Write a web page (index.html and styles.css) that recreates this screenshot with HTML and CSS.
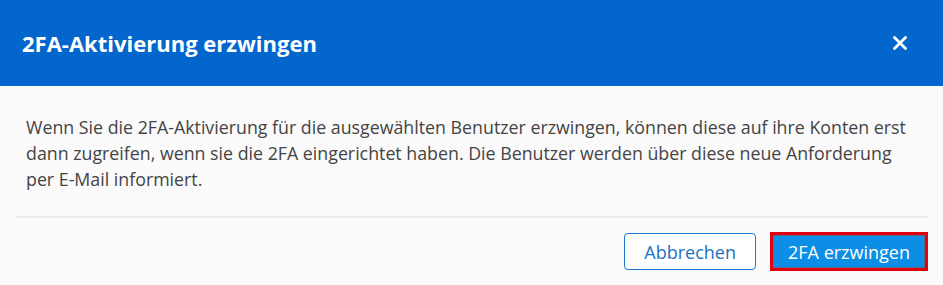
FILE: index.html
```html
<!DOCTYPE html>
<html lang="de">
<head>
  <meta charset="UTF-8" />
  <title>2FA-Aktivierung erzwingen</title>
  <link rel="stylesheet" href="styles.css">
</head>
<body>

  <div class="modal">
    <div class="modal-header">
      <h2>2FA-Aktivierung erzwingen</h2>
      <button class="close-btn" title="Schließen">
        <svg width="14" height="14" viewBox="0 0 14 14">
          <path d="M1.5 1.5 L12.5 12.5 M12.5 1.5 L1.5 12.5" stroke="#fff" stroke-width="2.8" stroke-linecap="round" />
        </svg>
      </button>
    </div>

    <div class="modal-body">
      <p>Wenn Sie die 2FA-Aktivierung für die ausgewählten Benutzer erzwingen, können diese auf ihre Konten erst<br>
        dann zugreifen, wenn sie die 2FA eingerichtet haben. Die Benutzer werden über diese neue Anforderung<br>
        per E-Mail informiert.</p>
    </div>

    <!-- Buttons -->
    <div class="modal-footer">
      <button class="btn btn-outline">Abbrechen</button>
      <button class="btn btn-primary">2FA erzwingen</button>
    </div>
  </div>

</body>
</html>
```

FILE: styles.css
```css
body {
  margin: 0;
  font-family: "Open Sans", "Noto Sans", Arial, sans-serif;
  background: #fafafa;
}

.modal {
  width: 943px;
  height: 285px;
  background: #fafafa;
}

.modal-header {
  display: flex;
  align-items: center;
  justify-content: space-between;
  height: 86px;
  padding: 0 30px 0 22px;
  background: #0366cc;
  color: #fff;
}

.modal-header h2 {
  margin: 0;
  font-size: 22px;
  font-weight: 700;
  letter-spacing: 0;
}

.close-btn {
  display: flex;
  align-items: center;
  justify-content: center;
  width: 26px;
  height: 26px;
  padding: 0;
  background: none;
  border: none;
  cursor: pointer;
}

.modal-body {
  padding: 28px 0 0 10px;
  height: 102px;
  border-bottom: 2px solid #ececec;
  margin: 0 15px 0 16px;
}

.modal-body p {
  margin: 0;
  font-size: 17.8px;
  line-height: 26px;
  color: #444;
  white-space: nowrap;
}

.modal-footer {
  display: flex;
  justify-content: flex-end;
  align-items: center;
  gap: 14px;
  padding: 14px 15px 0 0;
}

.btn {
  font-family: inherit;
  font-size: 18px;
  border-radius: 4px;
  cursor: pointer;
}

.btn-outline {
  height: 37px;
  padding: 0 19px;
  background: #fff;
  color: #1b72c4;
  border: 1px solid #1b78cf;
}

.btn-primary {
  height: 39px;
  padding: 0 15px;
  background: #0c8ee6;
  color: #fff;
  border: 3px solid #e0000f;
  border-radius: 0;
  box-shadow: inset 0 0 0 1px #5a6b8a;
}
```
